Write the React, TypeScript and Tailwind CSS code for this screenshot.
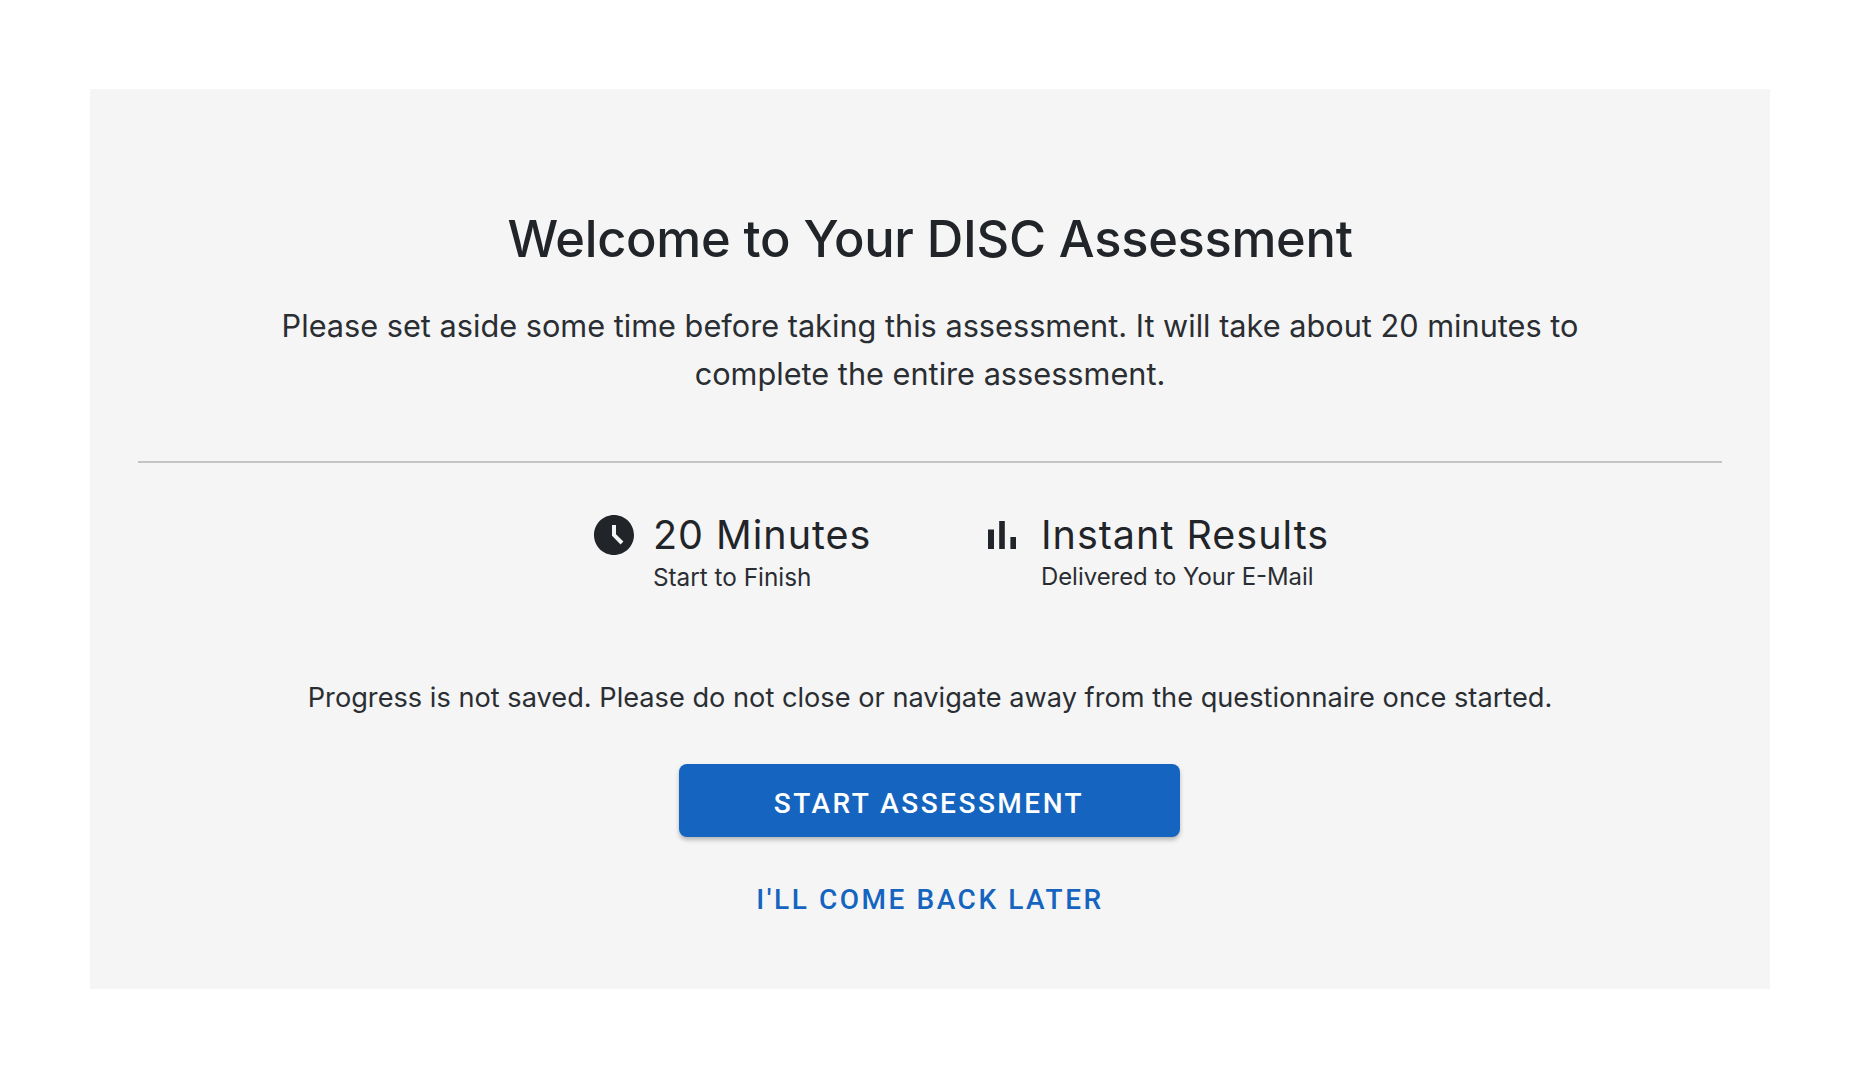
export default function App() {
  return (
    <div className="min-h-[1084px] bg-white pl-[90px] pt-[89px] pb-[95px] font-['Inter',sans-serif] text-[#212529]">
      <div className="flex h-[900px] w-[1680px] flex-col items-center bg-[#f5f5f5] px-12 pt-[120px]">
        <h1 className="text-center text-[50.6px] font-medium leading-[60px] tracking-[-0.3px]">Welcome to Your DISC Assessment</h1>
        <p className="mt-[33px] w-[1320px] text-center text-[30.7px] leading-[48px] text-[#2a2e33]">
          Please set aside some time before taking this assessment. It will take about 20 minutes to complete the entire assessment.
        </p>
        <div className="mt-[63px] h-[2px] w-full bg-[#c4c4c4]" />
        <div className="ml-[59px] mt-[49px] flex items-start">
          <div className="flex w-[388px] items-start">
            <svg viewBox="0 0 24 24" className="mt-[-1px] h-12 w-12 shrink-0 fill-[#212529]">
              <path d="M11.99 2C6.47 2 2 6.48 2 12s4.47 10 9.99 10C17.52 22 22 17.52 22 12S17.52 2 11.99 2zm3.3 14.71L11 12.41V7h2v4.59l3.71 3.71-1.42 1.41z" />
            </svg>
            <div className="ml-[15px]">
              <div className="text-[39.5px] leading-[46px] tracking-[1px]">20 Minutes</div>
              <div className="mt-[1px] text-[24.3px] leading-[36px] text-[#2a2e33]">Start to Finish</div>
            </div>
          </div>
          <div className="flex items-start">
            <svg viewBox="0 0 24 24" className="mt-[-1px] h-12 w-12 shrink-0 fill-[#212529]">
              <path d="M5 9.2h3V19H5zM10.6 5h2.8v14h-2.8zm5.6 8H19v6h-2.8z" />
            </svg>
            <div className="ml-[15px]">
              <div className="text-[39.5px] leading-[46px] tracking-[1px]">Instant Results</div>
              <div className="mt-[1px] text-[23.9px] leading-[36px] text-[#2a2e33]">Delivered to Your E-Mail</div>
            </div>
          </div>
        </div>
        <p className="mt-[82px] text-center text-[27.2px] leading-[42px] text-[#2a2e33]">
          Progress is not saved. Please do not close or navigate away from the questionnaire once started.
        </p>
        <button className="mr-[2px] mt-[45px] flex h-[73px] w-[501px] items-center justify-center rounded-[8px] bg-[#1565c0] pt-[6px] font-['Roboto',sans-serif] text-[28px] font-medium tracking-[2.5px] text-white shadow-[0_3px_4px_rgba(0,0,0,0.25)]">
          START ASSESSMENT
        </button>
        <button className="mt-[42px] flex h-[42px] items-center justify-center font-['Roboto',sans-serif] text-[28px] font-medium tracking-[2.55px] text-[#1565c0]">
          I'LL COME BACK LATER
        </button>
      </div>
    </div>
  );
}
